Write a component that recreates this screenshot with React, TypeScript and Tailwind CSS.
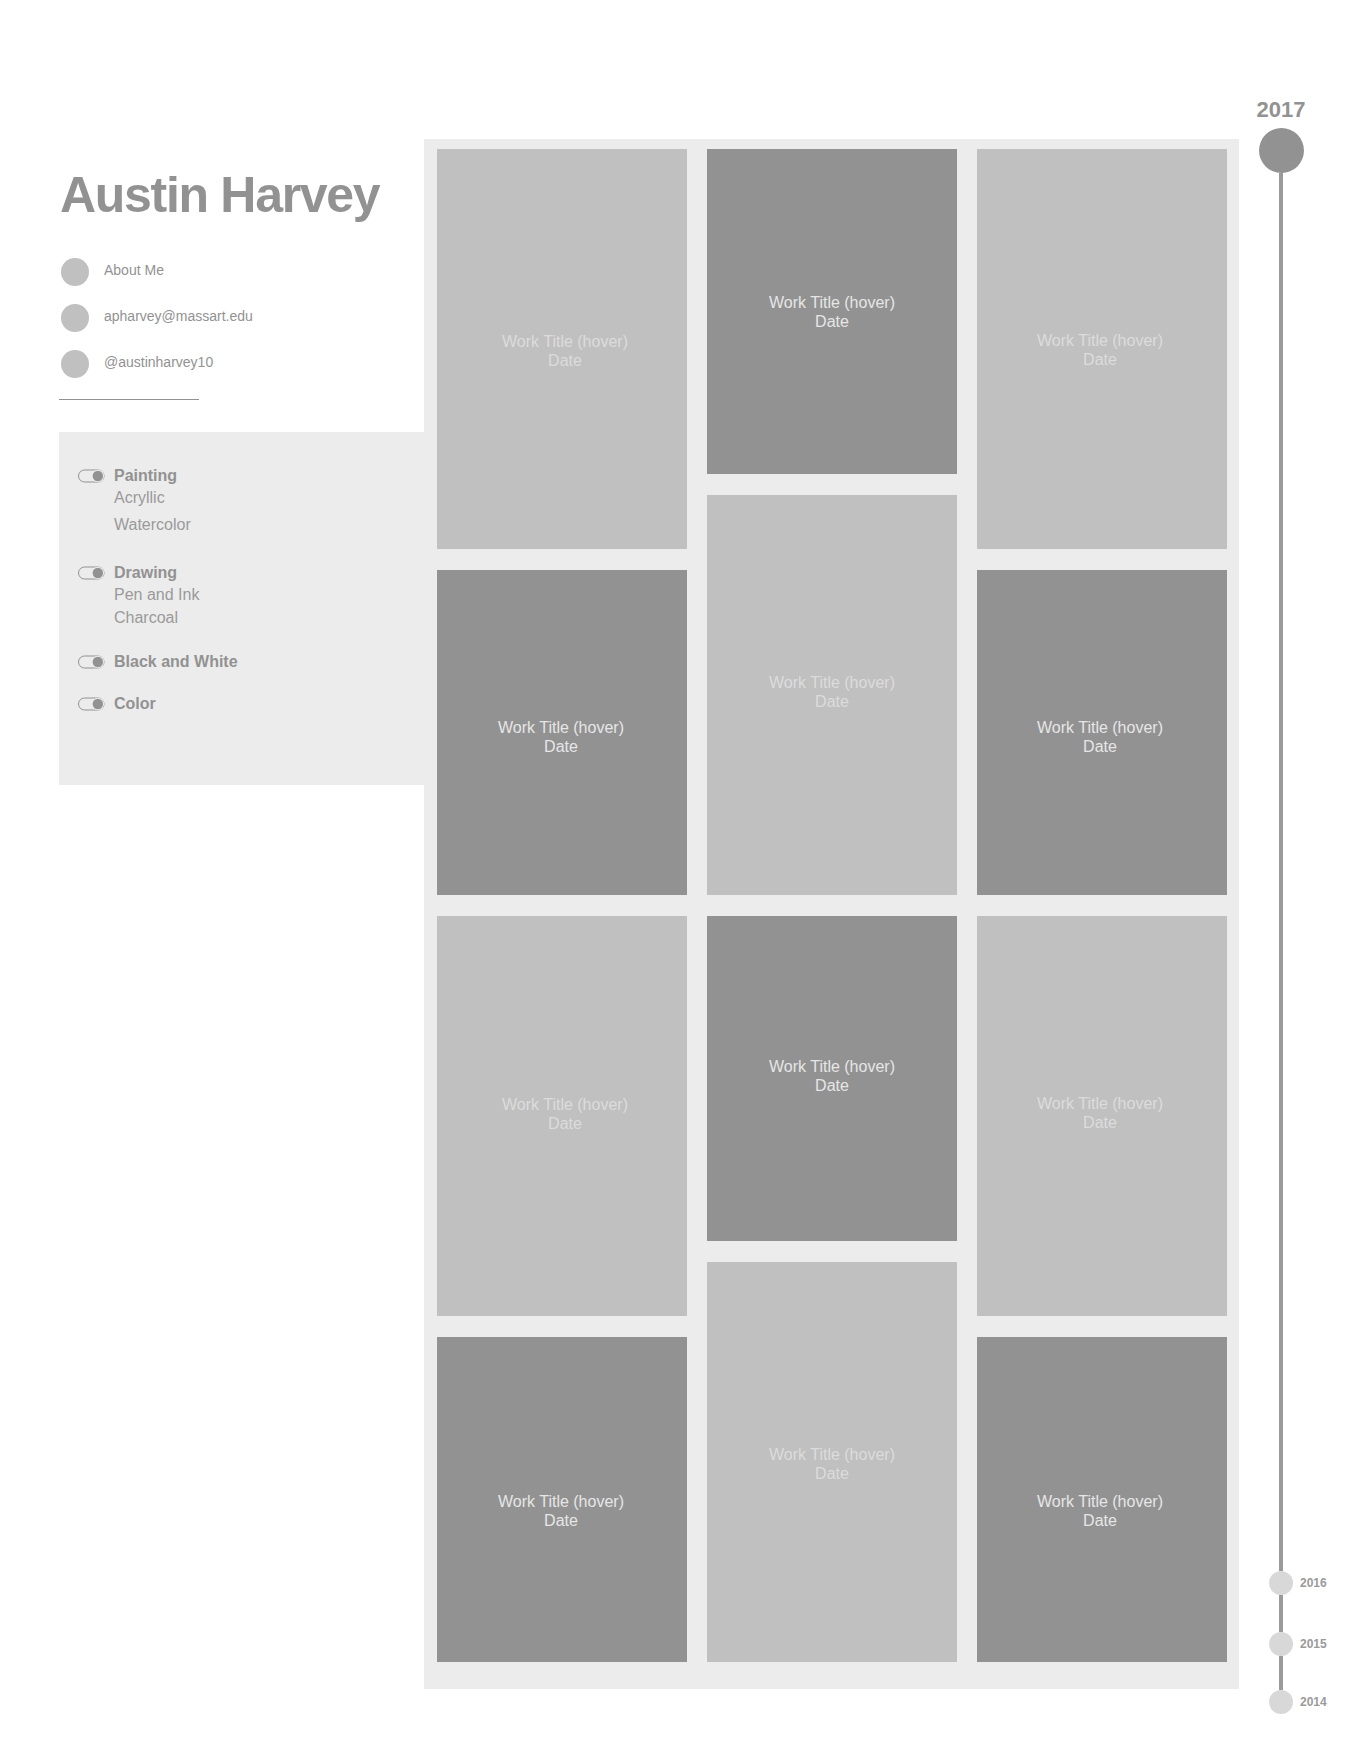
import React from 'react';

type Tile = { h: number; dark: boolean; shift: string };

// shift nudges the caption a little; the mockup does not centre them exactly
const columns: Tile[][] = [
  [
    { h: 400, dark: false, shift: 'translate-x-[3px] translate-y-[2px]' },
    { h: 325, dark: true, shift: '-translate-x-[1px] translate-y-[4px]' },
    { h: 400, dark: false, shift: 'translate-x-[3px] -translate-y-[2px]' },
    { h: 325, dark: true, shift: '-translate-x-[1px] translate-y-[11px]' },
  ],
  [
    { h: 325, dark: true, shift: '' },
    { h: 400, dark: false, shift: '-translate-y-[3px]' },
    { h: 325, dark: true, shift: '-translate-y-[3px]' },
    { h: 400, dark: false, shift: 'translate-y-[2px]' },
  ],
  [
    { h: 400, dark: false, shift: '-translate-x-[2px] translate-y-[1px]' },
    { h: 325, dark: true, shift: '-translate-x-[2px] translate-y-[4px]' },
    { h: 400, dark: false, shift: '-translate-x-[2px] -translate-y-[3px]' },
    { h: 325, dark: true, shift: '-translate-x-[2px] translate-y-[11px]' },
  ],
];

const contacts = ['About Me', 'apharvey@massart.edu', '@austinharvey10'];

function Toggle() {
  return (
    <svg width="27" height="14" viewBox="0 0 27 14" className="shrink-0">
      <rect x="0.5" y="1" width="25.5" height="12" rx="6" fill="none" stroke="#929292" strokeWidth="1" />
      <circle cx="19.8" cy="7" r="6.2" fill="#ececec" />
      <circle cx="19.8" cy="7" r="5.2" fill="#929292" />
    </svg>
  );
}

function FilterGroup({ label, items, className }: { label: string; items?: string[]; className?: string }) {
  return (
    <div className={className}>
      <div className="flex h-[22px] items-center gap-[9px]">
        <Toggle />
        <span className="text-[16px] font-bold leading-[22px] text-[#929292]">{label}</span>
      </div>
      {items?.map((item, i) => (
        <div
          key={item}
          className={
            'pl-[36px] text-[16px] leading-[22px] text-[#9a9a9a] ' +
            (i === 1 && label === 'Painting' ? 'mt-[5px]' : i === 1 ? 'mt-[1px]' : '')
          }
        >
          {item}
        </div>
      ))}
    </div>
  );
}

function WorkTile({ tile }: { tile: Tile }) {
  return (
    <div
      className={
        'flex flex-col items-center justify-center text-center text-[16px] leading-[19px] ' +
        (tile.dark ? 'bg-[#929292] text-[#e6e6e6]' : 'bg-[#c0c0c0] text-[#dcdcdc]')
      }
      style={{ height: tile.h }}
    >
      <div className={'flex flex-col items-center ' + tile.shift}>
        <span>Work Title (hover)</span>
        <span>Date</span>
      </div>
    </div>
  );
}

function YearDot({ year }: { year: string }) {
  return (
    <div className="relative h-[24px] w-[24px] rounded-full bg-[#d8d8d8]">
      <span className="absolute left-[31px] top-1/2 -translate-y-1/2 text-[12px] font-bold leading-none text-[#9a9a9a]">
        {year}
      </span>
    </div>
  );
}

export default function App() {
  return (
    <div className="min-h-[1750px] bg-white font-['Liberation_Sans',Arial,sans-serif]">
      <div className="flex items-start pl-[59px]">
        <aside className="mt-[170px] w-[365px] shrink-0">
          <h1 className="pl-px text-[50px] font-bold leading-none tracking-[-1.3px] text-[#929292]">Austin Harvey</h1>

          <ul className="mt-[38px] flex flex-col gap-[18px] pl-[2px]">
            {contacts.map((c) => (
              <li key={c} className="flex items-center gap-[15px]">
                <span className="h-[28px] w-[28px] shrink-0 rounded-full bg-[#c0c0c0]" />
                <span className="-mt-[4px] text-[14px] text-[#929292]">{c}</span>
              </li>
            ))}
          </ul>

          <div className="mt-[21px] h-px w-[140px] bg-[#929292]" />

          <div className="mt-[32px] h-[353px] bg-[#ececec] pl-[19px] pt-[33px]">
            <FilterGroup label="Painting" items={['Acryllic', 'Watercolor']} />
            <FilterGroup label="Drawing" items={['Pen and Ink', 'Charcoal']} className="mt-[26px]" />
            <FilterGroup label="Black and White" className="mt-[22px]" />
            <FilterGroup label="Color" className="mt-[20px]" />
          </div>
        </aside>

        <main className="mt-[139px] grid w-[815px] shrink-0 grid-cols-3 gap-x-[20px] bg-[#ececec] pb-[27px] pl-[13px] pr-[12px] pt-[10px]">
          {columns.map((col, ci) => (
            <div key={ci} className="flex flex-col gap-[21px]">
              {col.map((tile, ti) => (
                <WorkTile key={ti} tile={tile} />
              ))}
            </div>
          ))}
        </main>

        <div className="mt-[99px] flex w-[84px] shrink-0 flex-col items-center">
          <span className="text-[22px] font-bold leading-none text-[#929292]">2017</span>
          <div className="mt-[7px] h-[45px] w-[45px] rounded-full bg-[#929292]" />
          <div className="h-[1398px] w-[4px] bg-[#9a9a9a]" />
          <YearDot year="2016" />
          <div className="h-[37px] w-[4px] bg-[#9a9a9a]" />
          <YearDot year="2015" />
          <div className="h-[34px] w-[4px] bg-[#9a9a9a]" />
          <YearDot year="2014" />
        </div>
      </div>
    </div>
  );
}
